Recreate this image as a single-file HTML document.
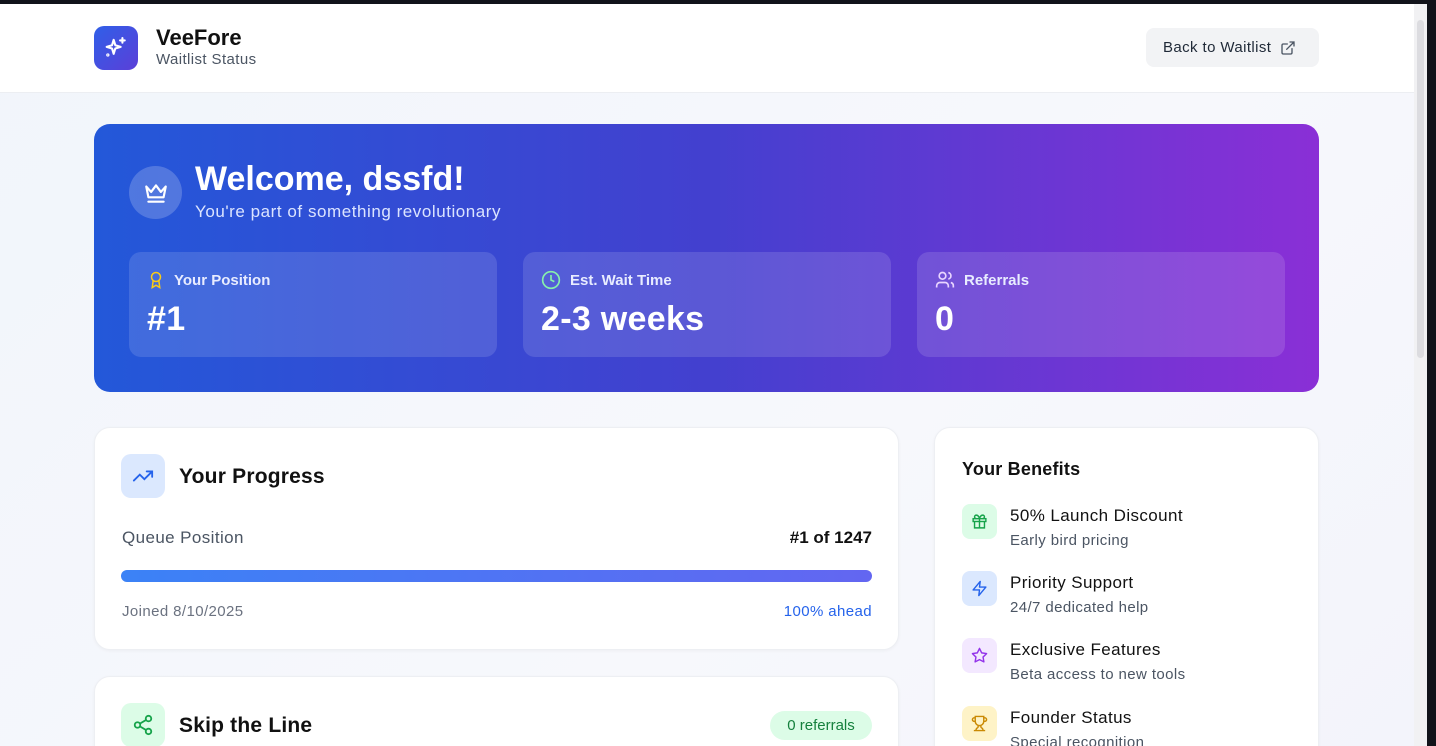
<!DOCTYPE html>
<html><head><meta charset="utf-8"><style>
*{box-sizing:border-box;margin:0;padding:0}
html,body{overflow:hidden}
body{width:1436px;height:746px;font-family:"Liberation Sans",sans-serif;background:#11131a;position:relative}
.page{position:absolute;left:0;top:4px;width:1414px;height:742px;background:linear-gradient(135deg,#f1f5fb,#f7f8fc 60%,#f3f4fb);overflow:hidden}
.sb{position:absolute;left:1414px;top:4px;width:13px;height:742px;background:#f1f1f3}
.sb div{position:absolute;left:3px;top:16px;width:7px;height:338px;background:#dcdce0;border-radius:4px}
header{height:89px;background:#fff;border-bottom:1px solid #eceef2;position:relative}
.logo{position:absolute;left:94px;top:22px;width:44px;height:44px;border-radius:10px;background:linear-gradient(135deg,#2f5fe8,#5b3fd8);display:flex;align-items:center;justify-content:center}
.brand{position:absolute;left:156px;top:21px}
.brand b{font-size:22px;color:#111;display:block}
.brand span{font-size:15px;color:#4b5563;letter-spacing:.4px}
.back{position:absolute;left:1146px;top:24px;width:173px;height:39px;background:#f2f3f5;border-radius:8px;font-size:15px;color:#1f2937;display:flex;align-items:center;padding-left:17px;gap:9px;letter-spacing:.4px}
.hero{position:absolute;left:94px;top:120px;width:1225px;height:268px;border-radius:16px;background:linear-gradient(90deg,#2358d9,#4340cf 50%,#8a2fd6)}
.crown{position:absolute;left:35px;top:42px;width:53px;height:53px;border-radius:50%;background:rgba(255,255,255,.2);display:flex;align-items:center;justify-content:center}
.hero h1{position:absolute;left:101px;top:36px;font-size:34px;color:#fff;font-weight:bold}
.hero p{position:absolute;left:101px;top:78px;font-size:17px;color:#dbe4ff;letter-spacing:.55px}
.stat{position:absolute;top:128px;width:368px;height:105px;border-radius:12px;background:rgba(255,255,255,.13)}
.stat .l{position:absolute;left:18px;top:18px;font-size:15px;color:#e8ecff;display:flex;align-items:center;gap:9px;font-weight:bold}
.stat .v{position:absolute;left:18px;top:48px;font-size:34px;color:#fff;font-weight:bold;letter-spacing:.3px}
.card{position:absolute;background:#fff;border:1px solid #edeff3;border-radius:16px;box-shadow:0 1px 3px rgba(0,0,0,.04)}
.ib{width:44px;height:44px;border-radius:10px;display:flex;align-items:center;justify-content:center;position:absolute}
.ct{position:absolute;font-size:21px;font-weight:bold;color:#111;letter-spacing:.2px}
.ben{position:absolute;left:27px}
.ben .i{width:35px;height:35px;border-radius:8px;display:flex;align-items:center;justify-content:center;position:absolute;left:0;top:0}
.ben b{position:absolute;left:48px;top:2px;font-size:17px;font-weight:normal;color:#111;white-space:nowrap;letter-spacing:.4px}
.ben span{position:absolute;left:48px;top:28px;font-size:15px;color:#4b5563;white-space:nowrap;letter-spacing:.4px}
</style></head><body>
<div class="page">
<header>
<div class="logo"><svg width="28" height="28" viewBox="0 0 24 24" fill="none" stroke="#fff" stroke-width="1.8" stroke-linecap="round" stroke-linejoin="round"><path d="M10 5l1.4 4.6L16 11l-4.6 1.4L10 17l-1.4-4.6L4 11l4.6-1.4z"/><path d="M17.5 3.5v4M15.5 5.5h4"/><circle cx="5" cy="18" r=".5"/></svg></div>
<div class="brand"><b>VeeFore</b><span>Waitlist Status</span></div>
<div class="back">Back to Waitlist <svg width="16" height="16" viewBox="0 0 24 24" fill="none" stroke="#4b5563" stroke-width="2" stroke-linecap="round"><path d="M15 3h6v6M10 14L21 3M18 13v6a2 2 0 0 1-2 2H5a2 2 0 0 1-2-2V8a2 2 0 0 1 2-2h6"/></svg></div>
</header>
<div class="hero">
<div class="crown"><svg width="26" height="26" viewBox="0 0 24 24" fill="none" stroke="#fff" stroke-width="2" stroke-linejoin="round" stroke-linecap="round"><path d="M3 6l4.5 5L12 5l4.5 6L21 6l-2 10H5z"/><path d="M5 20h14"/></svg></div>
<h1>Welcome, dssfd!</h1>
<p>You're part of something revolutionary</p>
<div class="stat" style="left:35px"><div class="l"><svg width="18" height="20" viewBox="0 0 24 24" fill="none" stroke="#facc15" stroke-width="2"><circle cx="12" cy="8" r="6"/><path d="M8.2 13L7 22l5-3 5 3-1.2-9"/></svg>Your Position</div><div class="v">#1</div></div>
<div class="stat" style="left:429px"><div class="l"><svg width="20" height="20" viewBox="0 0 24 24" fill="none" stroke="#86efac" stroke-width="2"><circle cx="12" cy="12" r="10"/><path d="M12 6v6l4 2"/></svg>Est. Wait Time</div><div class="v">2-3 weeks</div></div>
<div class="stat" style="left:823px"><div class="l"><svg width="20" height="20" viewBox="0 0 24 24" fill="none" stroke="#e9d5ff" stroke-width="2"><circle cx="9" cy="7" r="4"/><path d="M2 21v-2a4 4 0 0 1 4-4h6a4 4 0 0 1 4 4v2M16 3.1a4 4 0 0 1 0 7.8M22 21v-2a4 4 0 0 0-3-3.9"/></svg>Referrals</div><div class="v">0</div></div>
</div>
<div class="card" style="left:94px;top:423px;width:805px;height:223px">
<div class="ib" style="left:26px;top:26px;background:#dbe8fe"><svg width="22" height="22" viewBox="0 0 24 24" fill="none" stroke="#2563eb" stroke-width="2" stroke-linecap="round"><path d="M22 7l-8.5 8.5-5-5L2 17M16 7h6v6"/></svg></div>
<div class="ct" style="left:84px;top:37px">Your Progress</div>
<div style="position:absolute;left:27px;top:100px;font-size:17px;color:#4b5563;letter-spacing:.4px">Queue Position</div>
<div style="position:absolute;right:26px;top:100px;font-size:17px;font-weight:bold;color:#111">#1 of 1247</div>
<div style="position:absolute;left:26px;top:142px;width:751px;height:12px;border-radius:6px;background:linear-gradient(90deg,#3b82f6,#6366f1)"></div>
<div style="position:absolute;left:27px;top:175px;font-size:15px;color:#6b7280;letter-spacing:.4px">Joined 8/10/2025</div>
<div style="position:absolute;right:26px;top:175px;font-size:15px;color:#2563eb;letter-spacing:.4px">100% ahead</div>
</div>
<div class="card" style="left:94px;top:672px;width:805px;height:120px">
<div class="ib" style="left:26px;top:26px;background:#dcfce7"><svg width="22" height="22" viewBox="0 0 24 24" fill="none" stroke="#16a34a" stroke-width="2"><circle cx="18" cy="5" r="3"/><circle cx="6" cy="12" r="3"/><circle cx="18" cy="19" r="3"/><path d="M8.6 13.5l6.8 4M15.4 6.5l-6.8 4"/></svg></div>
<div class="ct" style="left:84px;top:37px">Skip the Line</div>
<div style="position:absolute;left:675px;top:34px;width:102px;height:29px;border-radius:15px;background:#dcfce7;color:#15803d;font-size:15px;display:flex;align-items:center;justify-content:center">0 referrals</div>
</div>
<div class="card" style="left:934px;top:423px;width:385px;height:400px">
<div class="ct" style="left:27px;top:31px;font-size:18px">Your Benefits</div>
<div class="ben" style="top:76px"><div class="i" style="background:#dcfce7"><svg width="17" height="17" viewBox="0 0 24 24" fill="none" stroke="#16a34a" stroke-width="2"><rect x="3" y="8" width="18" height="4"/><path d="M12 8v13M19 12v9H5v-9M7.5 8a2.5 2.5 0 0 1 0-5C11 3 12 8 12 8s1-5 4.5-5a2.5 2.5 0 0 1 0 5"/></svg></div><b>50% Launch Discount</b><span>Early bird pricing</span></div>
<div class="ben" style="top:143px"><div class="i" style="background:#dbe8fe"><svg width="17" height="17" viewBox="0 0 24 24" fill="none" stroke="#2563eb" stroke-width="2" stroke-linejoin="round"><path d="M13 2L3 14h9l-1 8 10-12h-9z"/></svg></div><b>Priority Support</b><span>24/7 dedicated help</span></div>
<div class="ben" style="top:210px"><div class="i" style="background:#f3e8ff"><svg width="17" height="17" viewBox="0 0 24 24" fill="none" stroke="#9333ea" stroke-width="2" stroke-linejoin="round"><path d="M12 2l3.1 6.3 6.9 1-5 4.9 1.2 6.8-6.2-3.2-6.2 3.2 1.2-6.8-5-4.9 6.9-1z"/></svg></div><b>Exclusive Features</b><span>Beta access to new tools</span></div>
<div class="ben" style="top:278px"><div class="i" style="background:#fef3c7"><svg width="17" height="17" viewBox="0 0 24 24" fill="none" stroke="#ca8a04" stroke-width="2"><path d="M6 9H4.5a2.5 2.5 0 0 1 0-5H6M18 9h1.5a2.5 2.5 0 0 0 0-5H18M4 22h16M10 14.7V17c0 .6-.5 1-1 1.2C7.8 18.8 7 20.2 7 22M14 14.7V17c0 .6.5 1 1 1.2 1.2.6 2 2 2 3.8M18 2H6v7a6 6 0 0 0 12 0z"/></svg></div><b>Founder Status</b><span>Special recognition</span></div>
</div>
</div>
<div class="sb"><div></div></div>
</body></html>
